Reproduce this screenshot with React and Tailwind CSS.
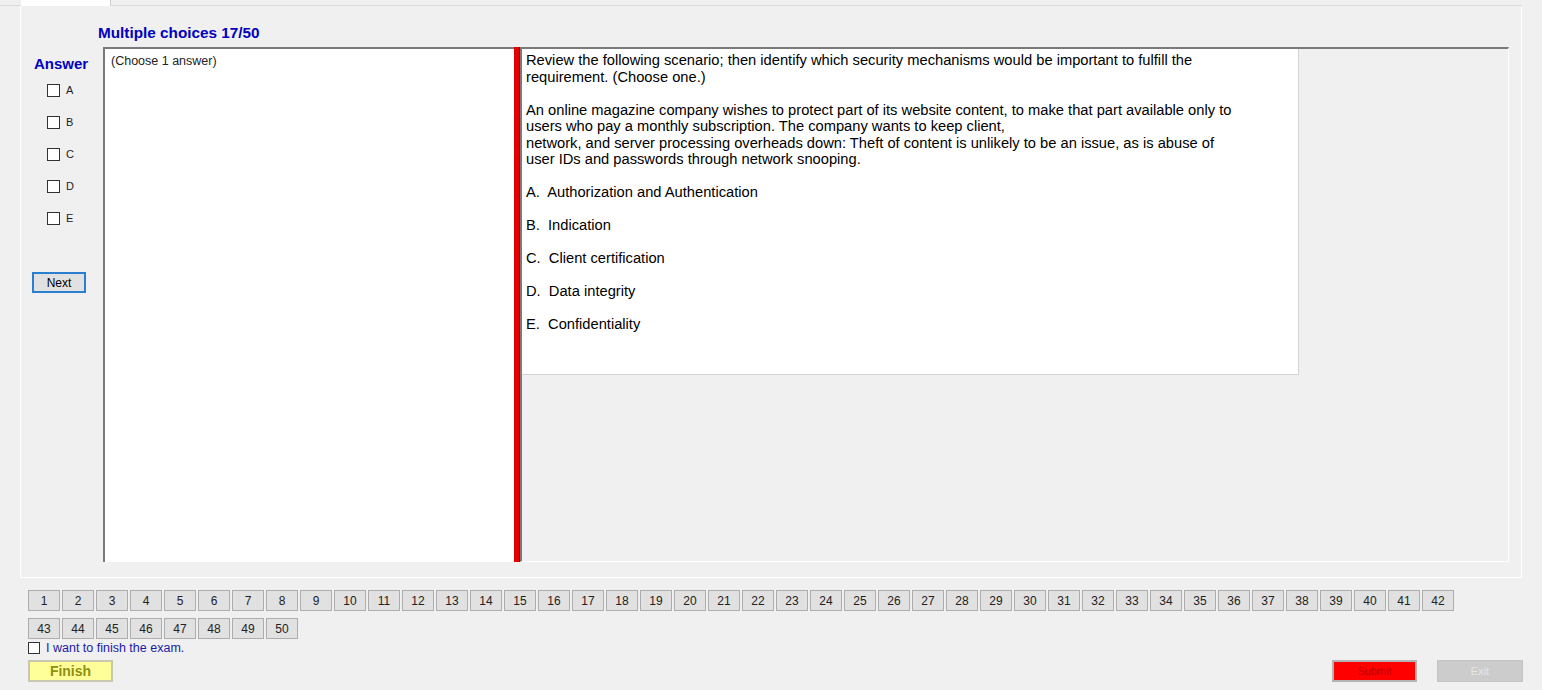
import { useState } from 'react';

const QUESTION = [
  'Review the following scenario; then identify which security mechanisms would be important to fulfill the',
  'requirement. (Choose one.)',
  '',
  'An online magazine company wishes to protect part of its website content, to make that part available only to',
  'users who pay a monthly subscription. The company wants to keep client,',
  'network, and server processing overheads down: Theft of content is unlikely to be an issue, as is abuse of',
  'user IDs and passwords through network snooping.',
  '',
  'A.  Authorization and Authentication',
  '',
  'B.  Indication',
  '',
  'C.  Client certification',
  '',
  'D.  Data integrity',
  '',
  'E.  Confidentiality',
];

const LETTERS = ['A', 'B', 'C', 'D', 'E'];
const NUMBERS = Array.from({ length: 50 }, (_, i) => i + 1);

function Box({ checked, onClick, size = 'w-[13px] h-[13px]' }) {
  return (
    <span
      onClick={onClick}
      className={`${size} border border-[#333] bg-white flex items-center justify-center text-[10px] leading-none cursor-default`}
    >
      {checked ? '✓' : ''}
    </span>
  );
}

export default function App() {
  const [picked, setPicked] = useState(null);
  const [finish, setFinish] = useState(false);

  return (
    <div
      className="w-[1542px] h-[690px] overflow-hidden bg-[#f0f0f0] text-black"
      style={{ fontFamily: '"Liberation Sans", Arial, sans-serif' }}
    >
      {/* tab strip */}
      <div className="flex h-[6px]">
        <div className="w-[21px] border-b border-[#dadada]" />
        <div className="w-[90px] bg-white border-r border-[#d0d0d0]" />
        <div className="flex-1 border-b border-[#dadada] mr-[20px]" />
      </div>

      {/* tab page */}
      <div className="mx-[20px] h-[572px] border-x border-b border-white flex flex-col">
        <div className="h-[41px] pt-[18px] pl-[77px] text-[15.3px] leading-[17px] font-bold text-[#0000c0]">
          Multiple choices 17/50
        </div>

        <div className="flex h-[515px]">
          {/* answer column */}
          <div className="w-[82px] shrink-0 flex flex-col">
            <div className="pt-[8px] pl-[13px] text-[15px] leading-[17px] font-bold text-[#0000c0]">
              Answer
            </div>
            <div className="mt-[12px] pl-[26px] flex flex-col gap-[19px]">
              {LETTERS.map((l) => (
                <div key={l} className="flex items-center gap-[6px] h-[13px]">
                  <Box checked={picked === l} onClick={() => setPicked(l)} />
                  <span className="text-[11px] leading-none text-[#222]">{l}</span>
                </div>
              ))}
            </div>
            <button className="mt-[47px] ml-[11px] w-[54px] h-[21px] bg-[#e1e1e1] border-2 border-[#2a7fd0] text-[12px] leading-none text-black">
              Next
            </button>
          </div>

          {/* answer note box */}
          <div className="w-[411px] shrink-0 bg-white border-t-2 border-l-2 border-[#7a7a7a] pl-[6px] pt-[5px] text-[12.5px] leading-[14px] text-[#222]">
            (Choose 1 answer)
          </div>

          {/* splitter */}
          <div className="w-[6px] shrink-0 bg-[#e40000] border-r border-[#b00000]" />

          {/* question panel */}
          <div className="w-[989px] shrink-0 border-t-2 border-l-2 border-[#7a7a7a] border-r border-b border-r-white border-b-white">
            <div className="w-[777px] h-[326px] bg-white border-r border-b border-[#d4d4d4] pl-[4px] pt-[3px] text-[14.7px] leading-[16.5px]">
              {QUESTION.map((line, i) => (
                <div key={i} className="h-[16.5px] whitespace-pre">
                  {line}
                </div>
              ))}
            </div>
          </div>
        </div>
      </div>

      {/* question numbers */}
      <div className="mt-[12px] ml-[28px] w-[1430px] flex flex-wrap gap-x-[2px] gap-y-[7px]">
        {NUMBERS.map((n) => (
          <button
            key={n}
            className="w-[32px] h-[21px] bg-[#e1e1e1] border border-[#adadad] text-[12px] leading-none text-[#222]"
          >
            {n}
          </button>
        ))}
      </div>

      <div className="mt-[3px] ml-[28px] flex items-center gap-[6px] h-[12px]">
        <Box checked={finish} onClick={() => setFinish(!finish)} size="w-[12px] h-[12px]" />
        <span className="text-[12.5px] leading-none text-[#1a1aa6]">I want to finish the exam.</span>
      </div>

      <div className="mt-[6px] flex items-center pl-[28px] pr-[19px]">
        <button className="w-[85px] h-[22px] bg-[#ffff99] border-2 border-[#c8c8b0] text-[14px] leading-none font-bold text-[#8f8f10]">
          Finish
        </button>
        <div className="flex-1" />
        <button className="w-[85px] h-[22px] bg-[#ff0000] border-2 border-[#b4b4b4] text-[11px] leading-none text-[#c00000]">
          Submit
        </button>
        <button className="ml-[20px] w-[86px] h-[22px] bg-[#cccccc] border border-[#c4c4c4] text-[11px] leading-none text-[#e6e6e6]">
          Exit
        </button>
      </div>
    </div>
  );
}
